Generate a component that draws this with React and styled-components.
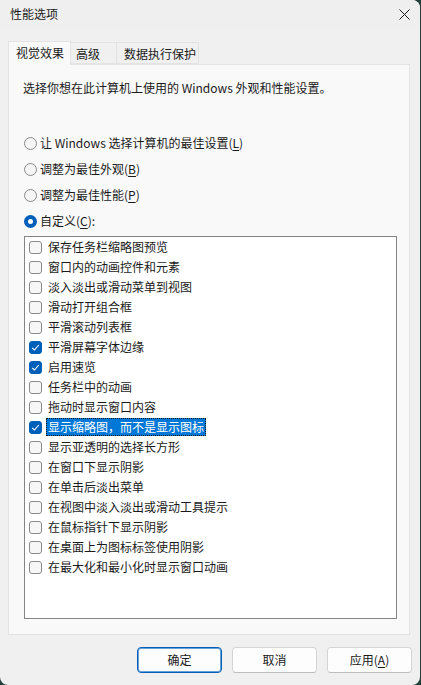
import styled, { createGlobalStyle } from 'styled-components';

const GlobalStyle = createGlobalStyle`
  html, body {
    margin: 0;
    padding: 0;
    background: #24403d;
  }
  body {
    font-family: "Noto Sans CJK SC", "Noto Sans", sans-serif;
    font-size: 12px;
    color: #1a1a1a;
  }
`;

const options = [
  { label: '让 Windows 选择计算机的最佳设置', key: 'L' },
  { label: '调整为最佳外观', key: 'B' },
  { label: '调整为最佳性能', key: 'P' },
  { label: '自定义', key: 'C', colon: true, checked: true },
];

const effects = [
  { name: '保存任务栏缩略图预览' },
  { name: '窗口内的动画控件和元素' },
  { name: '淡入淡出或滑动菜单到视图' },
  { name: '滑动打开组合框' },
  { name: '平滑滚动列表框' },
  { name: '平滑屏幕字体边缘', checked: true },
  { name: '启用速览', checked: true },
  { name: '任务栏中的动画' },
  { name: '拖动时显示窗口内容' },
  { name: '显示缩略图，而不是显示图标', checked: true, selected: true },
  { name: '显示亚透明的选择长方形' },
  { name: '在窗口下显示阴影' },
  { name: '在单击后淡出菜单' },
  { name: '在视图中淡入淡出或滑动工具提示' },
  { name: '在鼠标指针下显示阴影' },
  { name: '在桌面上为图标标签使用阴影' },
  { name: '在最大化和最小化时显示窗口动画' },
];

export default function App() {
  return (
    <>
      <GlobalStyle />
      <Window>
        <TitleBar>
          <Title>性能选项</Title>
          <CloseButton>
            <svg width="11" height="11" viewBox="0 0 11 11">
              <path d="M0.5 0.5 L10.5 10.5 M10.5 0.5 L0.5 10.5" stroke="#1a1a1a" strokeWidth="1" fill="none" />
            </svg>
          </CloseButton>
        </TitleBar>

        <Body>
          <TabStrip>
            <Tab $active $width={63}>视觉效果</Tab>
            <Tab $width={46}>高级</Tab>
            <Tab $width={82} $pad={7}>数据执行保护</Tab>
          </TabStrip>

          <Panel>
            <Description>选择你想在此计算机上使用的 Windows 外观和性能设置。</Description>

            <RadioGroup>
              {options.map((opt) => (
                <RadioRow key={opt.key}>
                  <Radio $checked={opt.checked} />
                  <span>
                    {opt.label}(<U>{opt.key}</U>){opt.colon ? ':' : ''}
                  </span>
                </RadioRow>
              ))}
            </RadioGroup>

            <ListBox>
              {effects.map((item, index) => (
                <ListItem key={index}>
                  <CheckBox $checked={item.checked}>
                    {item.checked && (
                      <svg width="9" height="9" viewBox="0 0 9 9">
                        <path d="M1.2 4.8 L3.4 7 L7.8 2" stroke="#fff" strokeWidth="1.1" fill="none" />
                      </svg>
                    )}
                  </CheckBox>
                  <ItemText $selected={item.selected}>{item.name}</ItemText>
                </ListItem>
              ))}
            </ListBox>
          </Panel>

          <Footer>
            <Button $primary>确定</Button>
            <Button>取消</Button>
            <Button>应用(<U>A</U>)</Button>
          </Footer>
        </Body>
      </Window>
    </>
  );
}

const Window = styled.div`
  width: 420px;
  height: 685px;
  display: flex;
  flex-direction: column;
  background: #f0f0f0;
  border-radius: 0 8px 8px 8px;
  overflow: hidden;
`;

const TitleBar = styled.div`
  height: 30px;
  display: flex;
  align-items: center;
  justify-content: space-between;
  padding: 0 10px 0 10px;
  background: #efefef;
`;

const Title = styled.div`
  font-size: 12px;
  line-height: 16px;
  margin-top: -2px;
`;

const CloseButton = styled.div`
  width: 12px;
  height: 12px;
  display: flex;
  align-items: center;
  justify-content: center;
  margin-top: -1px;
`;

const Body = styled.div`
  flex: 1;
  display: flex;
  flex-direction: column;
  padding: 11px 10px 0 8px;
`;

const TabStrip = styled.div`
  display: flex;
  align-items: flex-end;
  height: 23px;
  position: relative;
  z-index: 1;
`;

const Tab = styled.div`
  box-sizing: border-box;
  width: ${(p) => p.$width}px;
  height: ${(p) => (p.$active ? 24 : 22)}px;
  margin-bottom: ${(p) => (p.$active ? -1 : 0)}px;
  padding: ${(p) => (p.$active ? '3px 0 0 7px' : `3px 0 0 ${p.$pad || 5}px`)};
  line-height: 16px;
  font-size: 12px;
  background: ${(p) => (p.$active ? '#f9f9f9' : '#f0f0f0')};
  border: 1px solid #e3e3e3;
  border-left: ${(p) => (p.$active ? '1px solid #e3e3e3' : 'none')};
  border-bottom: ${(p) => (p.$active ? 'none' : '1px solid #e3e3e3')};
`;

const Panel = styled.div`
  box-sizing: border-box;
  width: 402px;
  height: 571px;
  background: #f9f9f9;
  border: 1px solid #e3e3e3;
  padding: 15px 12px 0 14px;
  display: flex;
  flex-direction: column;
`;

const Description = styled.div`
  line-height: 16px;
  white-space: nowrap;
`;

const RadioGroup = styled.div`
  display: flex;
  flex-direction: column;
  margin-top: 34px;
`;

const RadioRow = styled.div`
  height: 26px;
  display: flex;
  align-items: center;
  gap: 3px;
  padding-left: 1px;
  line-height: 16px;
`;

const Radio = styled.span`
  box-sizing: border-box;
  width: 13px;
  height: 13px;
  border-radius: 50%;
  flex-shrink: 0;
  border: ${(p) => (p.$checked ? '4px solid #005fb8' : '1px solid #8a8a8a')};
  background: ${(p) => (p.$checked ? '#ffffff' : '#f5f5f5')};
`;

const U = styled.span`
  text-decoration: underline;
  text-underline-offset: 2px;
`;

const ListBox = styled.div`
  box-sizing: border-box;
  width: 373px;
  height: 383px;
  margin: 2px 0 0 1px;
  background: #ffffff;
  border: 1px solid #858585;
  padding: 0 0 0 4px;
  display: flex;
  flex-direction: column;
`;

const ListItem = styled.div`
  height: 20px;
  display: flex;
  align-items: center;
  gap: 4px;
`;

const CheckBox = styled.span`
  box-sizing: border-box;
  width: 13px;
  height: 13px;
  flex-shrink: 0;
  border-radius: 3px;
  display: flex;
  align-items: center;
  justify-content: center;
  background: ${(p) => (p.$checked ? '#005fb8' : '#f7f7f7')};
  border: 1px solid ${(p) => (p.$checked ? '#005fb8' : '#8a8a8a')};
`;

const ItemText = styled.span`
  box-sizing: border-box;
  height: 18px;
  line-height: 16px;
  padding: 0 1px;
  white-space: nowrap;
  color: ${(p) => (p.$selected ? '#ffffff' : '#1a1a1a')};
  background: ${(p) => (p.$selected ? '#0078d7' : 'transparent')};
  border: 1px ${(p) => (p.$selected ? 'dotted #1a1a1a' : 'solid transparent')};
`;

const Footer = styled.div`
  display: flex;
  justify-content: flex-end;
  gap: 10px;
  margin-top: 12px;
  margin-right: -2px;
`;

const Button = styled.div`
  box-sizing: border-box;
  width: 85px;
  height: 26px;
  display: flex;
  align-items: center;
  justify-content: center;
  font-size: 12px;
  line-height: 16px;
  background: #fdfdfd;
  border-radius: 4px;
  border: 1px solid ${(p) => (p.$primary ? '#005fb8' : '#d5d5d5')};
  border-bottom-color: ${(p) => (p.$primary ? '#005fb8' : '#bdbdbd')};
  box-shadow: ${(p) => (p.$primary ? 'inset 0 0 0 1px #6aa0d6' : 'none')};
`;
